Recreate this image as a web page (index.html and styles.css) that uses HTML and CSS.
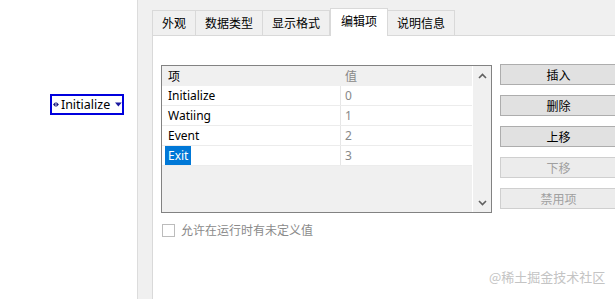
FILE: index.html
```html
<!DOCTYPE html>
<html lang="zh-CN">
<head>
  <meta charset="UTF-8" />
  <title>枚举属性 - 编辑项</title>
  <link rel="stylesheet" href="styles.css">
</head>
<body>
  <div class="front-panel">
    <div class="enum-ctl">
      <svg class="incdec" width="7" height="7" viewBox="0 0 7 7"><polygon points="0,3.5 3,0.5 3,6.5" /><polygon points="4,0.5 7,3.5 4,6.5" /></svg>
      <span>Initialize</span>
      <svg class="drop" width="8" height="5" viewBox="0 0 8 5"><polygon points="0,0 8,0 4,5" /></svg>
    </div>
  </div>

  <div class="dialog">
    <div class="tabs">
      <div class="tab">外观</div>
      <div class="tab">数据类型</div>
      <div class="tab">显示格式</div>
      <div class="tab active">编辑项</div>
      <div class="tab">说明信息</div>
    </div>

    <div class="page">
      <div class="edit-row">
        <div class="listbox">
          <div class="list-body">
            <div class="row head"><div class="cell">项</div><div class="cell val">值</div></div>
            <div class="row"><div class="cell">Initialize</div><div class="cell val">0</div></div>
            <div class="row"><div class="cell">Watiing</div><div class="cell val">1</div></div>
            <div class="row"><div class="cell">Event</div><div class="cell val">2</div></div>
            <div class="row"><div class="cell"><span class="sel">Exit</span></div><div class="cell val">3</div></div>
          </div>
          <div class="scrollbar">
            <svg width="9" height="6" viewBox="0 0 9 6"><polyline points="1,5 4.5,1.5 8,5" /></svg>
            <svg width="9" height="6" viewBox="0 0 9 6"><polyline points="1,1 4.5,4.5 8,1" /></svg>
          </div>
        </div>

        <div class="btn-col">
          <button class="btn">插入</button>
          <button class="btn">删除</button>
          <button class="btn">上移</button>
          <button class="btn" disabled>下移</button>
          <button class="btn" disabled>禁用项</button>
        </div>
      </div>

      <label class="check">
        <span class="box"></span>
        允许在运行时有未定义值
      </label>
    </div>
  </div>

  <div class="watermark">@稀土掘金技术社区</div>
</body>
</html>
```

FILE: styles.css
```css
body {
  margin: 0;
  width: 615px;
  height: 299px;
  overflow: hidden;
  display: flex;
  font-family: "Noto Sans", "Noto Sans CJK SC", sans-serif;
  font-size: 12px;
  color: #000;
  background: #fff;
}
.front-panel {
  width: 137px;
  flex: none;
  background: #fff;
  padding: 94px 0 0 50px;
  box-sizing: border-box;
}
.enum-ctl {
  display: flex;
  align-items: center;
  width: 74px;
  height: 21px;
  box-sizing: border-box;
  border: 2px solid #0000dd;
  padding: 0 0 0 1px;
  line-height: 17px;
}
.enum-ctl span {
  margin-left: 2px;
  font-size: 12.5px;
}
.incdec polygon {
  fill: #1a1a80;
}
.drop {
  margin-left: 5px;
}
.drop polygon {
  fill: #1a1aa0;
}
.dialog {
  flex: 1;
  background: #f0f0f0;
  border-left: 1px solid #dcdcdc;
  padding: 8px 0 0 14px;
  display: flex;
  flex-direction: column;
  min-width: 0;
}
.tabs {
  display: flex;
  align-items: flex-end;
  height: 27px;
  font-family: "Noto Sans CJK SC", sans-serif;
}
.tab {
  height: 25px;
  box-sizing: border-box;
  padding: 0 9px;
  border: 1px solid #d9d9d9;
  border-bottom: none;
  margin-right: -1px;
  line-height: 23px;
  background: #f0f0f0;
}
.tab.active {
  height: 28px;
  margin-bottom: -1px;
  padding: 0 10px;
  background: #fff;
  position: relative;
  line-height: 24px;
  margin-left: 1px;
}
.page {
  flex: 1;
  background: #fff;
  border-left: 1px solid #d9d9d9;
  border-top: 1px solid #d9d9d9;
  padding: 29px 0 0 8px;
}
.edit-row {
  display: flex;
  gap: 8px;
}
.listbox {
  width: 331px;
  height: 148px;
  box-sizing: border-box;
  border: 1px solid #828282;
  display: flex;
  flex: none;
}
.list-body {
  flex: 1;
  background: #f0f0f0;
}
.row {
  display: grid;
  grid-template-columns: 178px 1fr;
  height: 20px;
  background: #fff;
  border-bottom: 1px solid #ececec;
  box-sizing: border-box;
}
.row.head {
  background: #f0f0f0;
  border-bottom: none;
  font-family: "Noto Sans CJK SC", sans-serif;
}
.cell {
  padding-left: 6px;
  line-height: 19px;
}
.cell.val {
  border-left: 1px solid #e6e6e6;
  padding-left: 4px;
  color: #888;
}
.row.head .cell.val {
  border-left: 1px solid #f0f0f0;
}
.sel {
  display: inline-block;
  margin-left: -3px;
  padding: 0 3px;
  background: #0078d7;
  color: #fff;
}
.scrollbar {
  width: 18px;
  border-left: 1px solid #fff;
  background: #f0f0f0;
  display: flex;
  flex-direction: column;
  justify-content: space-between;
  align-items: center;
  padding: 7px 0 6px;
}
.scrollbar polyline {
  fill: none;
  stroke: #606060;
  stroke-width: 1.6;
}
.btn-col {
  display: flex;
  flex-direction: column;
  gap: 10px;
  margin-top: -1px;
}
.btn {
  width: 117px;
  height: 21px;
  padding: 0;
  border: 1px solid #adadad;
  background: #e1e1e1;
  font-family: "Noto Sans CJK SC", sans-serif;
  font-size: 12px;
  color: #000;
  line-height: 18px;
}
.btn:disabled {
  border-color: #cfcfcf;
  background: #ececec;
  color: #a0a0a0;
}
.check {
  display: flex;
  align-items: center;
  gap: 6px;
  margin: 10px 0 0 1px;
  line-height: 14px;
  color: #8a8a8a;
  font-family: "Noto Sans CJK SC", sans-serif;
}
.box {
  width: 13px;
  height: 13px;
  box-sizing: border-box;
  border: 1px solid #bcbcbc;
}
.watermark {
  position: absolute;
  left: 489px;
  top: 267px;
  font-family: "Noto Sans CJK SC", sans-serif;
  font-size: 13px;
  color: #c4c4c4;
}
```
